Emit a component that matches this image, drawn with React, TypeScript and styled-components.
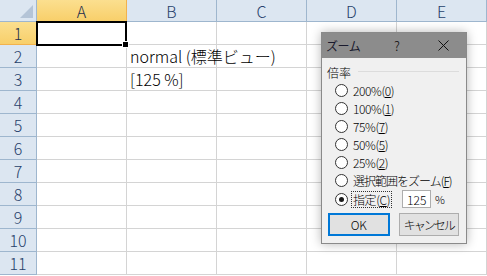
import React from "react";
import styled, { createGlobalStyle, css } from "styled-components";

const Global = createGlobalStyle`
  html, body { margin: 0; padding: 0; background: #ffffff; }
  body { width: 487px; height: 276px; overflow: hidden; font-family: "Noto Sans CJK JP", "Noto Sans", sans-serif; }
`;

const Page = styled.div`
  position: relative;
  width: 487px;
  height: 276px;
  overflow: hidden;
  background: #ffffff;
`;

const Sheet = styled.div`
  display: grid;
  grid-template-columns: 37px repeat(5, 90px);
  grid-template-rows: 22px repeat(11, 23px);
`;

const Cell = styled.div`
  box-sizing: border-box;
  border-right: 1px solid #d4d4d4;
  border-bottom: 1px solid #d4d4d4;
  font-family: "Noto Sans CJK JP", sans-serif;
  font-weight: 300;
  font-size: 16px;
  color: #000;
  white-space: nowrap;
  overflow: visible;
  padding-left: 3px;
  display: flex;
  align-items: flex-end;
  line-height: 21px;
  min-width: 0;
`;

const Header = styled.div<{ $sel?: boolean }>`
  box-sizing: border-box;
  display: flex;
  align-items: center;
  justify-content: center;
  font-family: "Noto Sans CJK JP", sans-serif;
  font-weight: 300;
  font-size: 16px;
  color: #27416b;
  background: #dce6f1;
  border-right: 1px solid #9eb6ce;
  border-bottom: 1px solid #9eb6ce;
  ${(p) =>
    p.$sel &&
    css`
      background: linear-gradient(#fbdf8f, #f8cf6a);
      border-right-color: #f2b24d;
      border-bottom-color: #f2b24d;
      color: #1e2f4d;
    `}
`;

const Corner = styled.div`
  box-sizing: border-box;
  background: #dce6f1;
  border-right: 1px solid #9eb6ce;
  border-bottom: 1px solid #9eb6ce;
  position: relative;
  &::after {
    content: "";
    position: absolute;
    right: 3px;
    bottom: 3px;
    width: 0;
    height: 0;
    border-left: 13px solid transparent;
    border-bottom: 13px solid #b4c4d7;
  }
`;

const Selection = styled.div`
  position: absolute;
  left: 36px;
  top: 21px;
  width: 91px;
  height: 25px;
  box-sizing: border-box;
  border: 2px solid #000;
  z-index: 2;
  &::after {
    content: "";
    position: absolute;
    right: -4px;
    bottom: -4px;
    width: 5px;
    height: 5px;
    background: #000;
    border: 1px solid #fff;
  }
`;

const Dialog = styled.div`
  position: absolute;
  left: 321px;
  top: 32px;
  width: 146px;
  height: 212px;
  box-sizing: border-box;
  border: 1px solid #8a8a8a;
  background: #f0f0f0;
  box-shadow: 0 0 10px rgba(0, 0, 0, 0.28);
  display: flex;
  flex-direction: column;
  z-index: 5;
  font-family: "Noto Sans CJK JP", sans-serif;
  font-weight: 300;
  font-size: 12px;
  color: #000;
`;

const TitleBar = styled.div`
  height: 25px;
  background: #8c8c8c;
  display: flex;
  align-items: center;
  padding-left: 4px;
  flex-shrink: 0;
`;

const Title = styled.span`
  flex: 1;
  font-size: 12px;
  font-weight: 400;
  letter-spacing: -0.5px;
  color: #1a1a2e;
`;

const TitleBtn = styled.span<{ $w: number }>`
  width: ${(p) => p.$w}px;
  font-size: 13px;
  color: #111;
  display: flex;
  justify-content: center;
  align-items: center;
`;

const Body = styled.div`
  flex: 1;
  display: flex;
  flex-direction: column;
  padding: 6px 7px 7px 5px;
`;

const GroupTitle = styled.div`
  height: 16px;
  display: flex;
  align-items: center;
  gap: 7px;
  &::after {
    content: "";
    flex: 1;
    height: 1px;
    background: #dcdcdc;
    margin-top: -2px;
  }
`;

const RadioList = styled.div`
  display: flex;
  flex-direction: column;
  padding-left: 8px;
  margin-top: 1px;
`;

const RadioRow = styled.div<{ $h?: number }>`
  height: ${(p) => p.$h ?? 18}px;
  display: flex;
  align-items: center;
  gap: 3px;
  white-space: nowrap;
`;

const Circle = styled.span<{ $on?: boolean }>`
  width: 13px;
  height: 13px;
  box-sizing: border-box;
  border-radius: 50%;
  border: 1px solid #333;
  background: #fff;
  display: flex;
  align-items: center;
  justify-content: center;
  flex-shrink: 0;
  &::after {
    content: "";
    width: 5px;
    height: 5px;
    border-radius: 50%;
    background: ${(p) => (p.$on ? "#1a1a1a" : "transparent")};
  }
`;

const Label = styled.span<{ $focus?: boolean; $tight?: boolean }>`
  font-size: 12px;
  letter-spacing: ${(p) => (p.$tight ? "-1px" : "-0.4px")};
  padding: 0 1px;
  line-height: 15px;
  border: 1px dotted ${(p) => (p.$focus ? "#333" : "transparent")};
`;

const Ul = styled.span`
  text-decoration: underline;
`;

const NumInput = styled.div`
  width: 29px;
  height: 18px;
  box-sizing: border-box;
  border: 1px solid #adadad;
  background: #fff;
  margin-left: 7px;
  padding-left: 4px;
  display: flex;
  align-items: center;
  font-size: 12px;
`;

const Pct = styled.span`
  margin-left: 1px;
  font-size: 11px;
`;

const Buttons = styled.div`
  display: flex;
  gap: 9px;
  margin-top: 4px;
  padding-left: 1px;
`;

const Btn = styled.div<{ $def?: boolean; $w: number }>`
  width: ${(p) => p.$w}px;
  height: 23px;
  box-sizing: border-box;
  background: #e1e1e1;
  border: ${(p) => (p.$def ? "2px solid #0078d7" : "1px solid #adadad")};
  display: flex;
  align-items: center;
  justify-content: center;
  font-size: 12px;
`;

const BtnText = styled.span<{ $tight?: boolean }>`
  letter-spacing: ${(p) => (p.$tight ? "-2px" : "0")};
`;

const cols = ["A", "B", "C", "D", "E"];
const cellText: Record<string, string> = {
  "2-1": "normal (標準ビュー)",
  "3-1": "[125 %]",
};

export default function App() {
  const rows = Array.from({ length: 11 }, (_, i) => i + 1);
  return (
    <Page>
      <Global />
      <Sheet>
        <Corner />
        {cols.map((c, i) => (
          <Header key={c} $sel={i === 0}>
            {c}
          </Header>
        ))}
        {rows.map((r) => (
          <React.Fragment key={r}>
            <Header $sel={r === 1}>{r}</Header>
            {cols.map((c, ci) => (
              <Cell key={c}>{cellText[`${r}-${ci}`] ?? ""}</Cell>
            ))}
          </React.Fragment>
        ))}
      </Sheet>
      <Selection />
      <Dialog>
        <TitleBar>
          <Title>ズーム</Title>
          <TitleBtn $w={46}>?</TitleBtn>
          <TitleBtn $w={46}>
            <svg width="11" height="11" viewBox="0 0 11 11">
              <path d="M0.5 0.5 L10.5 10.5 M10.5 0.5 L0.5 10.5" stroke="#111" strokeWidth="1" />
            </svg>
          </TitleBtn>
        </TitleBar>
        <Body>
          <GroupTitle>倍率</GroupTitle>
          <RadioList>
            <RadioRow>
              <Circle />
              <Label>200%(<Ul>0</Ul>)</Label>
            </RadioRow>
            <RadioRow>
              <Circle />
              <Label>100%(<Ul>1</Ul>)</Label>
            </RadioRow>
            <RadioRow>
              <Circle />
              <Label>75%(<Ul>7</Ul>)</Label>
            </RadioRow>
            <RadioRow>
              <Circle />
              <Label>50%(<Ul>5</Ul>)</Label>
            </RadioRow>
            <RadioRow>
              <Circle />
              <Label>25%(<Ul>2</Ul>)</Label>
            </RadioRow>
            <RadioRow>
              <Circle />
              <Label $tight>選択範囲をズーム(<Ul>F</Ul>)</Label>
            </RadioRow>
            <RadioRow $h={20}>
              <Circle $on />
              <Label $focus>指定(<Ul>C</Ul>)</Label>
              <NumInput>125</NumInput>
              <Pct>%</Pct>
            </RadioRow>
          </RadioList>
          <Buttons>
            <Btn $def $w={62}>
              <BtnText>OK</BtnText>
            </Btn>
            <Btn $w={61}>
              <BtnText $tight>キャンセル</BtnText>
            </Btn>
          </Buttons>
        </Body>
      </Dialog>
    </Page>
  );
}
